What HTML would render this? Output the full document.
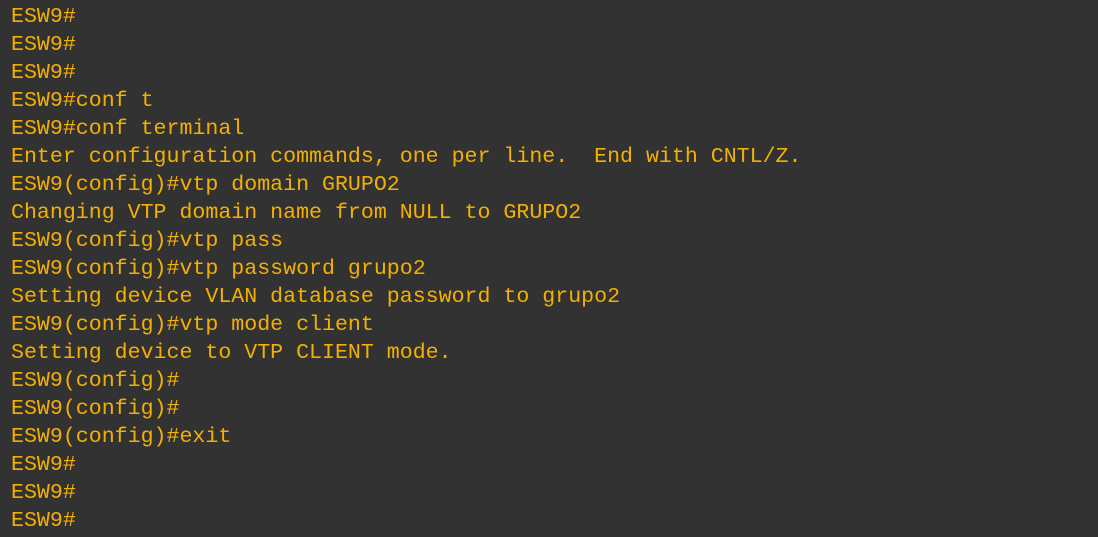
<!DOCTYPE html>
<html><head><meta charset="utf-8"><style>
html,body{margin:0;padding:0;width:1098px;height:537px;overflow:hidden;background:#323232;}
pre{margin:0;position:absolute;left:11px;top:3px;font-family:"Liberation Mono",monospace;font-size:21.6px;line-height:28px;color:#f4b000;}
</style></head><body><pre>ESW9#
ESW9#
ESW9#
ESW9#conf t
ESW9#conf terminal
Enter configuration commands, one per line.  End with CNTL/Z.
ESW9(config)#vtp domain GRUPO2
Changing VTP domain name from NULL to GRUPO2
ESW9(config)#vtp pass
ESW9(config)#vtp password grupo2
Setting device VLAN database password to grupo2
ESW9(config)#vtp mode client
Setting device to VTP CLIENT mode.
ESW9(config)#
ESW9(config)#
ESW9(config)#exit
ESW9#
ESW9#
ESW9#</pre></body></html>
